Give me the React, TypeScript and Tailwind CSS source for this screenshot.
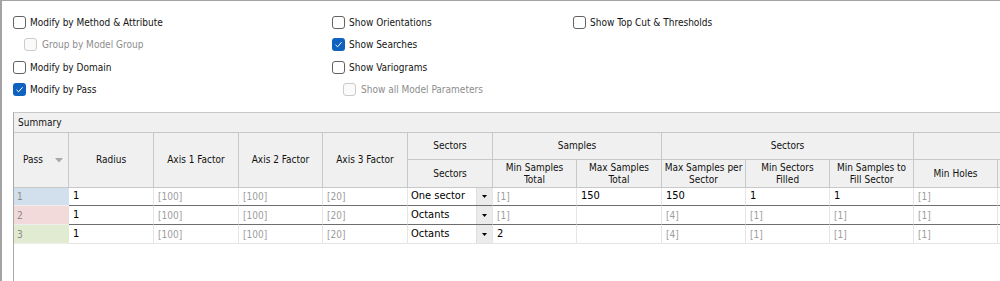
import React from "react";

type Opt = { label: string; checked?: boolean; disabled?: boolean; indent?: boolean };

const col1: Opt[] = [
  { label: "Modify by Method & Attribute" },
  { label: "Group by Model Group", disabled: true, indent: true },
  { label: "Modify by Domain" },
  { label: "Modify by Pass", checked: true },
];
const col2: Opt[] = [
  { label: "Show Orientations" },
  { label: "Show Searches", checked: true },
  { label: "Show Variograms" },
  { label: "Show all Model Parameters", disabled: true, indent: true },
];
const col3: Opt[] = [{ label: "Show Top Cut & Thresholds" }];

interface Row {
  pass: string;
  tint: string;
  cells: string[]; // radius .. min holes
}

const rows: Row[] = [
  { pass: "1", tint: "bg-[#d1e0ec]", cells: ["1", "[100]", "[100]", "[20]", "One sector", "[1]", "150", "150", "1", "1", "[1]"] },
  { pass: "2", tint: "bg-[#f1dad9]", cells: ["1", "[100]", "[100]", "[20]", "Octants", "[1]", "", "[4]", "[1]", "[1]", "[1]"] },
  { pass: "3", tint: "bg-[#e1ebd1]", cells: ["1", "[100]", "[100]", "[20]", "Octants", "2", "", "[4]", "[1]", "[1]", "[1]"] },
];

function Check({ opt }: { opt: Opt }) {
  return (
    <div className={`flex items-center h-[22.5px] ${opt.indent ? "pl-[11px] gap-[5px]" : "gap-[4px]"}`}>
      {opt.checked ? (
        <span className="w-[13px] h-[13px] rounded-[3px] bg-[#0f63be] flex items-center justify-center shrink-0">
          <svg width="9" height="9" viewBox="0 0 9 9">
            <path d="M1.5 4.8 L3.6 6.8 L7.6 2.2" fill="none" stroke="#fff" strokeWidth="1" />
          </svg>
        </span>
      ) : (
        <span
          className={`w-[13px] h-[13px] rounded-[3px] border shrink-0 ${
            opt.disabled ? "border-[#cbcbcb] bg-[#fafafa]" : "border-[#626262] bg-white"
          }`}
        />
      )}
      <span className={`whitespace-nowrap ${opt.disabled ? "text-[#8d8d8d]" : "text-[#141414]"}`}>{opt.label}</span>
    </div>
  );
}

const hd = "bg-[#f0f0f0] border-r border-b border-[#c8c8c8] flex items-center justify-center text-center leading-[12px] text-[#111]";

function SortArrow() {
  return (
    <svg width="8" height="5" viewBox="0 0 8 5">
      <path d="M0 0 H8 L4 4.5 Z" fill="#a8a8a8" />
    </svg>
  );
}

export default function App() {
  return (
    <div className="w-[1000px] h-[281px] overflow-hidden bg-white border-l-2 border-t border-[#a3a3a3] font-['DejaVu_Sans_Condensed','DejaVu_Sans',sans-serif] font-stretch-condensed text-[10px]">
      <div className="grid grid-cols-[319px_241px_1fr] pl-[11px] pt-[10px] h-[111px]">
        <div className="flex flex-col">
          {col1.map((o) => (
            <Check key={o.label} opt={o} />
          ))}
        </div>
        <div className="flex flex-col">
          {col2.map((o) => (
            <Check key={o.label} opt={o} />
          ))}
        </div>
        <div className="flex flex-col">
          {col3.map((o) => (
            <Check key={o.label} opt={o} />
          ))}
        </div>
      </div>

      <div className="ml-[11px] border-l border-t border-l-[#a9a9a9] border-t-[#c8c8c8] h-[200px]">
        <div className="h-[20px] bg-[#f0f0f0] border-b border-[#c8c8c8] flex items-center pl-[4px] text-[#111]">
          Summary
        </div>
        <div className="grid grid-cols-[55px_85px_85px_84px_85px_85px_84px_85px_84px_84px_84px_84px_100px] grid-rows-[27px_28px_18px_19px_19px] w-max">
          {/* header row 1 */}
          <div className={`${hd} row-span-2 !justify-between pl-[9px] pr-[5px]`}>
            <span>Pass</span>
            <SortArrow />
          </div>
          <div className={`${hd} row-span-2`}>Radius</div>
          <div className={`${hd} row-span-2`}>Axis 1 Factor</div>
          <div className={`${hd} row-span-2`}>Axis 2 Factor</div>
          <div className={`${hd} row-span-2`}>Axis 3 Factor</div>
          <div className={hd}>Sectors</div>
          <div className={`${hd} col-span-2`}>Samples</div>
          <div className={`${hd} col-span-3`}>Sectors</div>
          <div className={`${hd} col-span-2`} />
          {/* header row 2 */}
          <div className={hd}>Sectors</div>
          <div className={hd}>
            Min Samples
            <br />
            Total
          </div>
          <div className={hd}>
            Max Samples
            <br />
            Total
          </div>
          <div className={hd}>
            Max Samples per
            <br />
            Sector
          </div>
          <div className={hd}>
            Min Sectors
            <br />
            Filled
          </div>
          <div className={hd}>
            Min Samples to
            <br />
            Fill Sector
          </div>
          <div className={hd}>Min Holes</div>
          <div className={hd} />

          {/* data rows */}
          {rows.map((r, i) => {
            const line = i < 2 ? "border-b-[#6e6e6e]" : "border-b-[#e4e4e4]";
            return (
              <React.Fragment key={r.pass}>
                <div className={`${r.tint} border-b border-b-[#eeeeee] flex items-center pl-[3px] text-[#8a8a8a]`}>
                  {r.pass}
                </div>
                {r.cells.map((v, j) =>
                  j === 4 ? (
                    <div key={j} className={`border-r border-b border-r-[#e6e6e6] ${line} flex items-stretch`}>
                      <span className="flex-1 flex items-center pl-[3px] text-black text-[11px]">{v}</span>
                      <span className="w-[16px] bg-[#ebebeb] border-l border-[#dedede] flex items-center justify-center">
                        <svg width="5" height="3" viewBox="0 0 5 3">
                          <path d="M0 0 H5 L2.5 3 Z" fill="#000" />
                        </svg>
                      </span>
                    </div>
                  ) : (
                    <div
                      key={j}
                      className={`border-r border-b border-r-[#e6e6e6] ${line} flex items-center pl-[4px] ${
                        v.startsWith("[") ? "text-[#9d9d9d]" : "text-black text-[11px]"
                      }`}
                    >
                      {v}
                    </div>
                  )
                )}
                <div className={`border-b ${line}`} />
              </React.Fragment>
            );
          })}
        </div>
      </div>
    </div>
  );
}
